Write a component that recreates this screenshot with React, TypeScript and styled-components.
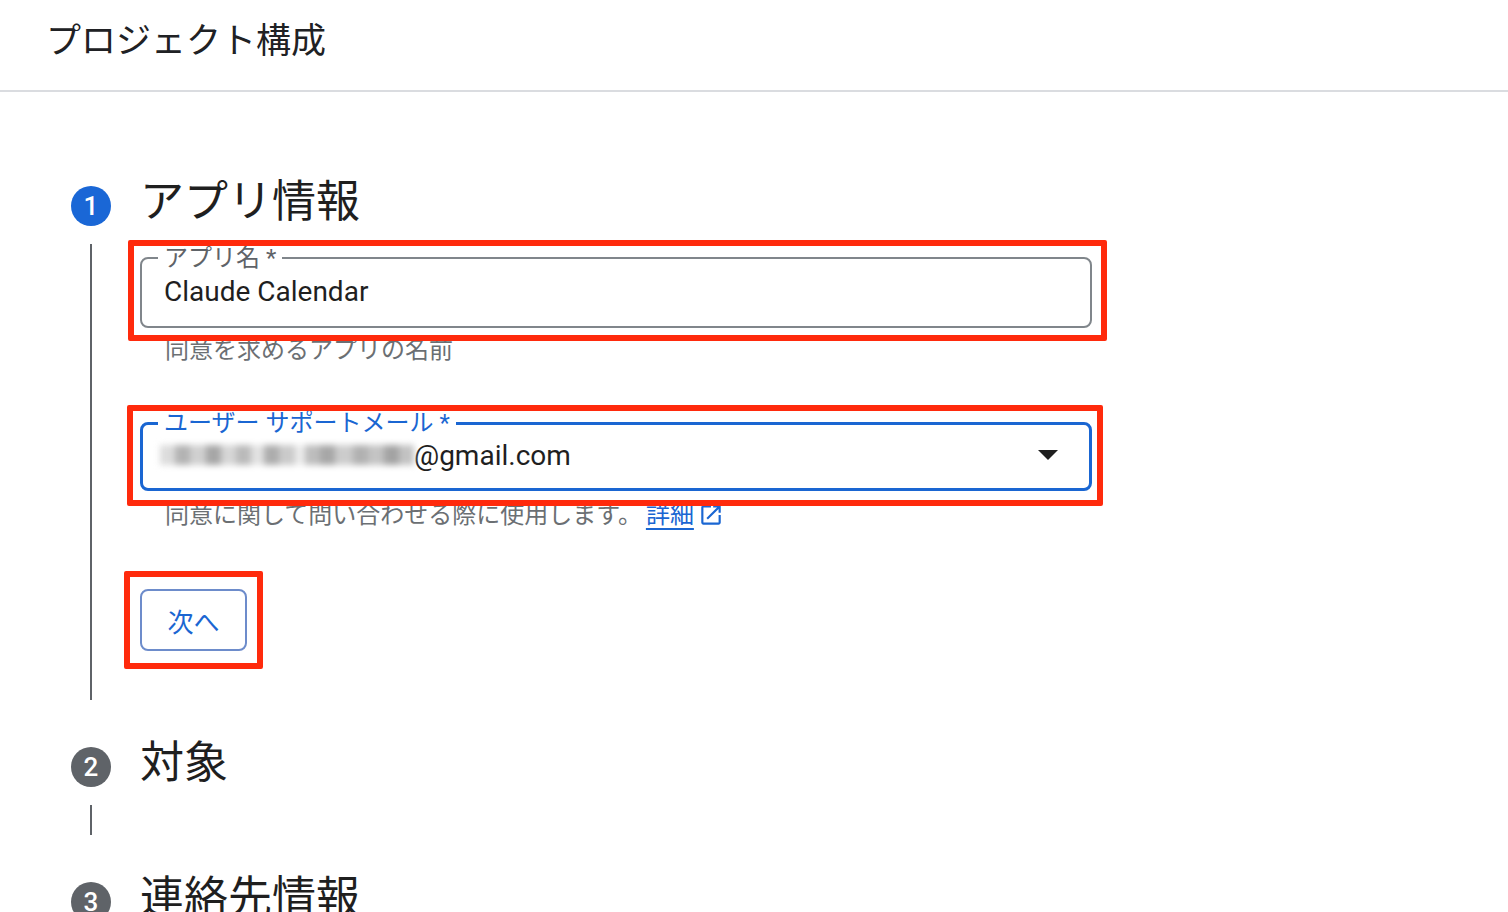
import React from "react";
import styled, { createGlobalStyle, css } from "styled-components";

const GlobalStyle = createGlobalStyle`
  html, body { margin: 0; padding: 0; background: #ffffff; }
  body {
    font-family: Roboto, "Noto Sans CJK JP", "Noto Sans", sans-serif;
    color: #1f1f1f;
    -webkit-font-smoothing: antialiased;
  }
  * { box-sizing: border-box; }
`;

const JP = `Roboto, "Noto Sans CJK JP", sans-serif`;

const Page = styled.div`
  width: 1508px;
  min-height: 912px;
  background: #fff;
`;

const Header = styled.header`
  height: 92px;
  padding: 22px 0 0 46px;
  border-bottom: 2px solid #dadce0;
`;

const HeaderTitle = styled.h1`
  margin: 0;
  font-family: ${JP};
  font-weight: 400;
  font-size: 35px;
  line-height: 40px;
  color: #202124;
`;

const Main = styled.main`
  padding: 94px 0 0 71px;
`;

const Step = styled.section``;

const StepHead = styled.div`
  display: grid;
  grid-template-columns: 40px 1fr;
  column-gap: 29px;
  align-items: center;
  height: 40px;
`;

const StepNumber = styled.div<{ $active?: boolean }>`
  width: 40px;
  height: 40px;
  border-radius: 50%;
  background: ${(p) => (p.$active ? "#1a67d6" : "#5f6368")};
  color: #fff;
  display: flex;
  align-items: center;
  justify-content: center;
  font-family: Roboto, sans-serif;
  font-weight: 500;
  font-size: 26px;
`;

const StepTitle = styled.h2`
  margin: -9px 0 0 0;
  font-family: ${JP};
  font-weight: 400;
  font-size: 44px;
  line-height: 48px;
  color: #1f1f1f;
`;

const StepBody = styled.div`
  display: grid;
  grid-template-columns: 40px 1fr;
  column-gap: 29px;
  padding: 18px 0 47px;
`;

const Connector = styled.div`
  justify-self: center;
  width: 2px;
  background: #5f6368;
`;

const StepContent = styled.div<{ $empty?: boolean }>`
  ${(p) =>
    p.$empty
      ? css`
          height: 30px;
        `
      : css`
          padding: 2px 0 49px;
          width: 952px;
        `}
`;

const Annotated = styled.div<{ $t: number; $r: number; $b: number; $l: number; $inline?: boolean; $gap?: number }>`
  position: relative;
  margin-top: ${(p) => p.$gap ?? 0}px;
  ${(p) =>
    p.$inline &&
    css`
      display: inline-block;
    `}
  &::after {
    content: "";
    position: absolute;
    top: ${(p) => -p.$t}px;
    right: ${(p) => -p.$r}px;
    bottom: ${(p) => -p.$b}px;
    left: ${(p) => -p.$l}px;
    border: 6px solid #ff2a0c;
    border-radius: 2px;
    pointer-events: none;
  }
`;

const Field = styled.fieldset<{ $focused?: boolean }>`
  margin: 0;
  width: 952px;
  min-width: 0;
  border-radius: 8px;
  border: ${(p) => (p.$focused ? "3px solid #1a66d2" : "2px solid #80868b")};
  padding: 0 ${(p) => (p.$focused ? 31 : 22)}px ${(p) => (p.$focused ? 17 : 19)}px
    ${(p) => (p.$focused ? 21 : 22)}px;
`;

const FieldLabel = styled.legend<{ $focused?: boolean }>`
  margin-left: -6px;
  padding: 0 6px;
  font-family: ${JP};
  font-size: 24px;
  line-height: 24px;
  color: ${(p) => (p.$focused ? "#1a66d2" : "#5f6368")};
`;

const FieldValue = styled.div`
  margin-top: 5px;
  height: 32px;
  display: flex;
  align-items: center;
  font-family: Roboto, sans-serif;
  font-size: 28px;
  color: #1f1f1f;
`;

const SelectRow = styled.div`
  margin-top: 4px;
  height: 32px;
  display: flex;
  align-items: center;
  justify-content: space-between;
`;

const Blurred = styled.span`
  display: inline-block;
  width: 254px;
  height: 20px;
  margin-left: -4px;
  filter: blur(3px);
  background:
    linear-gradient(
      90deg,
      #dcdcdc 0 6%,
      #b3b3b3 6% 12%,
      #d0d0d0 12% 18%,
      #a6a6a6 18% 24%,
      #d6d6d6 24% 30%,
      #bababa 30% 36%,
      #e2e2e2 36% 41%,
      #adadad 41% 47%,
      #cacaca 47% 53%,
      #ececec 53% 57%,
      #bdbdbd 57% 63%,
      #a7a7a7 63% 69%,
      #cccccc 69% 76%,
      #b1b1b1 76% 82%,
      #c4c4c4 82% 88%,
      #a3a3a3 88% 94%,
      #c2c2c2 94% 100%
    );
`;

const Email = styled.span`
  display: inline-flex;
  align-items: center;
  font-family: Roboto, sans-serif;
  font-size: 28px;
  color: #1f1f1f;
`;

const Helper = styled.div<{ $gap: number }>`
  margin-top: ${(p) => p.$gap}px;
  padding-left: 25px;
  font-family: ${JP};
  font-size: 24px;
  line-height: 28px;
  color: #6b6f73;
  display: flex;
  align-items: center;
`;

const HelpLink = styled.a`
  margin-left: 4px;
  color: #1a66d2;
  text-decoration: underline;
  text-decoration-thickness: 2px;
  text-underline-offset: 5px;
`;

const LinkIcon = styled.svg`
  margin-left: 4px;
  width: 26px;
  height: 26px;
  fill: #1a66d2;
`;

const ButtonWrap = styled.div`
  margin-top: 60px;
`;

const NextButton = styled.button`
  width: 107px;
  height: 62px;
  border: 2px solid #6d8ccb;
  border-radius: 8px;
  background: #fff;
  color: #1a66d2;
  font-family: ${JP};
  font-size: 26px;
  padding: 0;
  cursor: pointer;
`;

const Arrow = () => (
  <svg width="20" height="10" viewBox="0 0 20 10">
    <path d="M0 0 L20 0 L10 10 Z" fill="#1f1f1f" />
  </svg>
);

export default function App() {
  return (
    <Page>
      <GlobalStyle />
      <Header>
        <HeaderTitle>プロジェクト構成</HeaderTitle>
      </Header>
      <Main>
        <Step>
          <StepHead>
            <StepNumber $active>1</StepNumber>
            <StepTitle>アプリ情報</StepTitle>
          </StepHead>
          <StepBody>
            <Connector />
            <StepContent>
              <Annotated $t={6} $r={15} $b={13} $l={12}>
                <Field>
                  <FieldLabel>アプリ名 *</FieldLabel>
                  <FieldValue>Claude Calendar</FieldValue>
                </Field>
              </Annotated>
              <Helper $gap={8}>同意を求めるアプリの名前</Helper>

              <Annotated $t={6} $r={11} $b={15} $l={13} $gap={47}>
                <Field $focused>
                  <FieldLabel $focused>ユーザー サポートメール *</FieldLabel>
                  <SelectRow>
                    <Email>
                      <Blurred />
                      @gmail.com
                    </Email>
                    <Arrow />
                  </SelectRow>
                </Field>
              </Annotated>
              <Helper $gap={10}>
                同意に関して問い合わせる際に使用します。
                <HelpLink href="#">詳細</HelpLink>
                <LinkIcon viewBox="0 0 24 24">
                  <path d="M19 19H5V5h7V3H5c-1.11 0-2 .9-2 2v14c0 1.1.89 2 2 2h14c1.1 0 2-.9 2-2v-7h-2v7zM14 3v2h3.59l-9.83 9.83 1.41 1.41L19 6.41V10h2V3h-7z" />
                </LinkIcon>
              </Helper>

              <ButtonWrap>
                <Annotated $t={18} $r={16} $b={18} $l={16} $inline>
                  <NextButton>次へ</NextButton>
                </Annotated>
              </ButtonWrap>
            </StepContent>
          </StepBody>
        </Step>

        <Step>
          <StepHead>
            <StepNumber>2</StepNumber>
            <StepTitle>対象</StepTitle>
          </StepHead>
          <StepBody>
            <Connector />
            <StepContent $empty />
          </StepBody>
        </Step>

        <Step>
          <StepHead>
            <StepNumber>3</StepNumber>
            <StepTitle>連絡先情報</StepTitle>
          </StepHead>
        </Step>
      </Main>
    </Page>
  );
}
